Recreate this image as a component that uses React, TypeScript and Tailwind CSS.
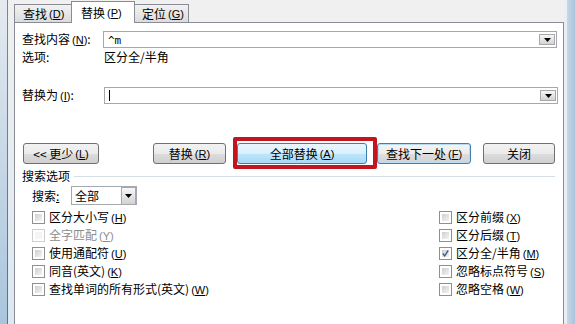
import React from 'react'

const cjk = "font-['Noto_Sans_CJK_SC',sans-serif]"

function Key({ k }: { k: string }) {
  return (
    <span className="ml-[2px] font-['Liberation_Sans',sans-serif] text-[11px]">
      (<span className="underline underline-offset-1">{k}</span>)
    </span>
  )
}

function DropArrow({ big = false }: { big?: boolean }) {
  return (
    <span
      className={`flex shrink-0 items-center justify-center border border-[#a8a8a8] bg-[linear-gradient(to_bottom,#f7f7f7,#d2d2d2)] ${
        big ? 'h-[18px] w-[15px]' : 'h-[11px] w-[16px]'
      }`}
    >
      <svg width="7" height="4" viewBox="0 0 7 4">
        <path d="M0 0h7L3.5 4z" fill="#000" />
      </svg>
    </span>
  )
}

function Combo({ children }: { children?: React.ReactNode }) {
  return (
    <div className="flex h-[17px] w-[454px] items-center border border-[#a4a9b1] bg-white pl-[4px] pr-[1px]">
      <div className="flex-1 leading-[14px]">{children}</div>
      <DropArrow />
    </div>
  )
}

function Btn({
  children,
  w,
  kind = 'normal',
}: {
  children: React.ReactNode
  w: string
  kind?: 'normal' | 'blue' | 'default'
}) {
  const look =
    kind === 'blue'
      ? 'border-[#3c7fb1] bg-[linear-gradient(to_bottom,#eaf6fd_0%,#d9f0fc_50%,#bee6fd_51%,#a7d9f5_100%)]'
      : kind === 'default'
        ? 'border-[#3c7fb1] shadow-[inset_0_0_0_1px_#b8dcf2] bg-[linear-gradient(to_bottom,#f4f4f4_0%,#ececec_50%,#dedede_51%,#d2d2d2_100%)]'
        : 'border-[#707070] bg-[linear-gradient(to_bottom,#f2f2f2_0%,#ebebeb_50%,#dddddd_51%,#cfcfcf_100%)]'
  return (
    <div
      className={`flex h-[21px] items-center justify-center rounded-[3px] border leading-[14px] ${look} ${w}`}
    >
      {children}
    </div>
  )
}

function Box({ checked = false, disabled = false }: { checked?: boolean; disabled?: boolean }) {
  return (
    <span
      className={`flex h-[13px] w-[13px] shrink-0 border bg-white p-[2px] ${
        disabled ? 'border-[#cfcfcf]' : 'border-[#8f8f8f]'
      }`}
    >
      <span
        className={`flex h-full w-full items-center justify-center ${
          disabled ? 'bg-[#f5f5f5]' : 'bg-[linear-gradient(135deg,#cfcfcf,#f3f3f3)]'
        }`}
      >
        {checked && (
          <svg width="9" height="9" viewBox="0 0 9 9">
            <path d="M1 4.5L3.5 7.5L8 0.5" fill="none" stroke="#3b5a8c" strokeWidth="1.8" />
          </svg>
        )}
      </span>
    </span>
  )
}

function Check({
  label,
  k,
  checked,
  disabled,
}: {
  label: string
  k: string
  checked?: boolean
  disabled?: boolean
}) {
  return (
    <div className={`flex h-[18px] items-center gap-[4px] ${disabled ? 'text-[#8d8d8d]' : ''}`}>
      <Box checked={checked} disabled={disabled} />
      <span className="leading-[14px]">
        {label}
        <Key k={k} />
      </span>
    </div>
  )
}

export default function App() {
  return (
    <div className={`flex h-[324px] w-[575px] overflow-hidden text-[12px] text-black ${cjk}`}>
      {/* left window frame */}
      <div className="w-[7px] bg-[linear-gradient(to_bottom,#e4eaf0,#a9c5dd)]" />
      <div className="w-px bg-[linear-gradient(to_bottom,#7b8796,#4f73a0)]" />
      <div className="w-[6px] bg-[linear-gradient(to_bottom,#f0f0f0,#dce8f2)]" />

      {/* dialog body */}
      <div className="flex w-[550px] flex-col bg-[#f0f0f0]">
        {/* tabs */}
        <div className="flex h-[22px] items-end">
          <div className="flex h-[18px] w-[58px] items-center border border-b-0 border-[#898c95] bg-[linear-gradient(to_bottom,#f2f2f2,#dcdcdc)] pl-[8px] leading-[14px]">
            查找
            <Key k="D" />
          </div>
          <div className="relative z-10 -mx-px -mb-px flex h-[22px] w-[64px] items-center border border-b-0 border-[#898c95] bg-white pl-[9px] leading-[14px]">
            替换
            <Key k="P" />
          </div>
          <div className="flex h-[18px] w-[55px] items-center border border-b-0 border-[#898c95] bg-[linear-gradient(to_bottom,#f2f2f2,#dcdcdc)] pl-[7px] leading-[14px]">
            定位
            <Key k="G" />
          </div>
        </div>

        {/* panel */}
        <div className="flex flex-1 flex-col border border-b-0 border-[#898c95] bg-white">
          <div className="mt-[8px] flex items-center pl-[7px]">
            <span className="w-[81px] leading-[14px]">
              查找内容
              <Key k="N" />:
            </span>
            <Combo>
              <span className="font-['DejaVu_Sans_Mono',monospace] text-[11px]">^m</span>
            </Combo>
          </div>

          <div className="mt-[2px] flex h-[14px] items-center pl-[7px] leading-[14px]">
            <span className="w-[82px]">选项:</span>
            <span>区分全/半角</span>
          </div>

          <div className="mt-[23px] flex items-center pl-[7px]">
            <span className="w-[82px] leading-[14px]">
              替换为
              <Key k="I" />:
            </span>
            <Combo>
              <span className="block h-[11px] w-px bg-black" />
            </Combo>
          </div>

          {/* buttons */}
          <div className="mt-[39px] flex items-center pl-[8px]">
            <Btn w="w-[76px]">
              &lt;&lt; 更少
              <Key k="L" />
            </Btn>
            <div className="ml-[54px]">
              <Btn w="w-[73px]">
                替换
                <Key k="R" />
              </Btn>
            </div>
            <div className="relative ml-[11px]">
              <Btn w="w-[130px]" kind="blue">
                全部替换
                <Key k="A" />
              </Btn>
              <div className="pointer-events-none absolute -bottom-[5px] -left-[4px] -right-[10px] -top-[6px] rounded-[2px] border-4 border-[#c3151d]" />
            </div>
            <div className="ml-[10px]">
              <Btn w="w-[94px]" kind="default">
                查找下一处
                <Key k="F" />
              </Btn>
            </div>
            <div className="ml-[12px]">
              <Btn w="w-[72px]">关闭</Btn>
            </div>
          </div>

          {/* search options header */}
          <div className="mt-[5px] flex h-[14px] items-center pl-[7px] pr-[8px]">
            <span className="leading-[14px]">搜索选项</span>
            <div className="ml-[4px] h-px flex-1 bg-[#d5dfe5]" />
          </div>

          <div className="mt-[3px] flex items-center pl-[17px]">
            <span className="w-[39px] leading-[14px]">
              搜索<span className="underline">:</span>
            </span>
            <div className="flex h-[19px] w-[66px] items-center border border-[#a4a9b1] bg-white pl-[3px]">
              <span className="flex-1 leading-[14px]">全部</span>
              <DropArrow big />
            </div>
          </div>

          <div className="mt-[3px] flex">
            <div className="flex w-[424px] flex-col pl-[17px]">
              <Check label="区分大小写" k="H" />
              <Check label="全字匹配" k="Y" disabled />
              <Check label="使用通配符" k="U" />
              <Check label="同音(英文)" k="K" />
              <Check label="查找单词的所有形式(英文)" k="W" />
            </div>
            <div className="flex flex-col">
              <Check label="区分前缀" k="X" />
              <Check label="区分后缀" k="T" />
              <Check label="区分全/半角" k="M" checked />
              <Check label="忽略标点符号" k="S" />
              <Check label="忽略空格" k="W" />
            </div>
          </div>
        </div>
      </div>

      {/* right window frame */}
      <div className="w-[3px] bg-[#e9eef4]" />
      <div className="w-[8px] bg-[linear-gradient(to_right,#c6d7e8,#aac4dc)]" />
    </div>
  )
}
